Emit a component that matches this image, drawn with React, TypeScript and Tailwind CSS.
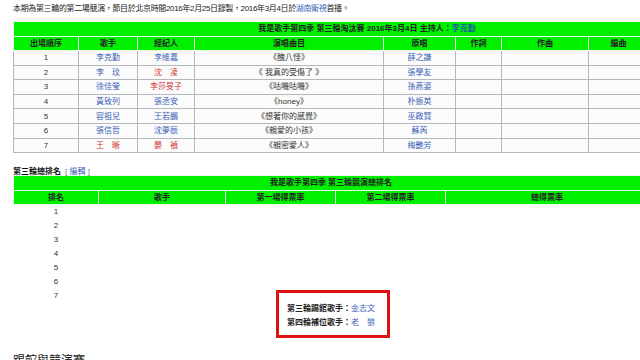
import React from "react";

const FONT = "font-['Liberation_Sans','Noto_Sans_CJK_TC',sans-serif]";

type R = { n: string; s: string; sr?: boolean; a: string; ar?: boolean; song: string; o: string };

const rows1: R[] = [
  { n: "1", s: "李克勤", a: "李維嘉", song: "《醜八怪》", o: "薛之謙" },
  { n: "2", s: "李　玟", a: "沈　凌", ar: true, song: "《 我真的受傷了 》", o: "張學友" },
  { n: "3", s: "徐佳瑩", a: "李莎旻子", ar: true, song: "《咕嘰咕嘰》", o: "孫燕姿" },
  { n: "4", s: "黃致列", a: "張丞安", song: "《honey》", o: "朴振英" },
  { n: "5", s: "容祖兒", a: "王若鵬", song: "《想著你的感覺》", o: "巫啟賢" },
  { n: "6", s: "張信哲", a: "沈夢辰", song: "《親愛的小孩》", o: "蘇芮" },
  { n: "7", s: "王　晰", sr: true, a: "晏　禎", ar: true, song: "《親密愛人》", o: "梅艷芳" },
];

const blue = "text-[#3a5fb8]";
const red = "text-[#d03030]";

export default function App() {
  const th = "border border-[#e8f8e8] bg-[#00f000] font-bold text-center p-0 h-[14.5px] leading-[13px]";
  const td = "border border-[#b4b8bc] text-center p-0 h-[14.6px] leading-[13px]";
  return (
    <div className={`w-[640px] h-[360px] overflow-hidden bg-white text-[#222] text-[8px] ${FONT}`}>
      <div className="pl-[13px] pt-[4px] leading-[10px] whitespace-nowrap tracking-[-0.35px]">
        本期為第三輪的第二場競演，節目於北京時間2016年2月25日錄製，2016年3月4日於<span className={blue}>湖南衛視</span>首播。
      </div>

      <table className="ml-[13px] mt-[7px] border-collapse table-fixed w-[635px] bg-[#fbfbfb]">
        <colgroup>
          <col className="w-[65px]" />
          <col className="w-[59px]" />
          <col className="w-[57px]" />
          <col className="w-[189px]" />
          <col className="w-[72px]" />
          <col className="w-[46px]" />
          <col className="w-[87px]" />
          <col className="w-[60px]" />
        </colgroup>
        <thead>
          <tr>
            <th colSpan={8} className={`${th} pl-[72px] whitespace-nowrap`}>
              我是歌手第四季 第三輪淘汰賽 2016年3月4日 主持人：<span className="text-[#1a5fa8]">李克勤</span>
            </th>
          </tr>
          <tr>
            {["出場順序", "歌手", "經紀人", "演唱曲目", "原唱", "作詞", "作曲", "編曲"].map((h) => (
              <th key={h} className={th}>{h}</th>
            ))}
          </tr>
        </thead>
        <tbody>
          {rows1.map((r) => (
            <tr key={r.n}>
              <td className={`${td} text-[#333]`}>{r.n}</td>
              <td className={`${td} ${r.sr ? red : blue}`}>{r.s}</td>
              <td className={`${td} ${r.ar ? red : blue}`}>{r.a}</td>
              <td className={`${td} text-[#333]`}>{r.song}</td>
              <td className={`${td} ${blue}`}>{r.o}</td>
              <td className={td}></td>
              <td className={td}></td>
              <td className={td}></td>
            </tr>
          ))}
        </tbody>
      </table>

      <div className="pl-[13px] mt-[14px] leading-[10px] whitespace-nowrap">
        <span className="font-bold text-[#111]">第三輪總排名</span>
        <span className="text-[#777] ml-[4px]">[ </span>
        <span className={blue}>編輯</span>
        <span className="text-[#777]"> ]</span>
      </div>

      <table className="ml-[13px] mt-[-2px] border-collapse table-fixed w-[635px]">
        <colgroup>
          <col className="w-[85px]" />
          <col className="w-[127px]" />
          <col className="w-[110px]" />
          <col className="w-[110px]" />
          <col className="w-[203px]" />
        </colgroup>
        <thead>
          <tr>
            <th colSpan={5} className={`${th} h-[12px] leading-[11px]`}>我是歌手第四季 第三輪競演總排名</th>
          </tr>
          <tr>
            {["排名", "歌手", "第一場得票率", "第二場得票率", "總得票率"].map((h) => (
              <th key={h} className={`${th} h-[12px] leading-[11px]`}>{h}</th>
            ))}
          </tr>
        </thead>
        <tbody>
          {["1", "2", "3", "4", "5", "6", "7"].map((n) => (
            <tr key={n}>
              <td className="h-[14px] p-0 text-center leading-[13px] text-[#333]">{n}</td>
              <td className="p-0"></td>
              <td className="p-0"></td>
              <td className="p-0"></td>
              <td className="p-0"></td>
            </tr>
          ))}
        </tbody>
      </table>

      <div className="flex pl-[276px] mt-[-13px]">
        <div className="w-[114px] h-[48px] border-[3px] border-[#e01010] bg-white pl-[8px] pt-[9px] leading-[14px] whitespace-nowrap">
          <div>
            <span className="font-bold text-[#222]">第三輪踢館歌手：</span>
            <span className={blue}>金志文</span>
          </div>
          <div>
            <span className="font-bold text-[#222]">第四輪補位歌手：</span>
            <span className={blue}>老　狼</span>
          </div>
        </div>
      </div>

      <div className="pl-[13px] mt-[16px] text-[12px] leading-[14px] text-[#111] whitespace-nowrap">
        踢館與競演賽
      </div>
    </div>
  );
}
